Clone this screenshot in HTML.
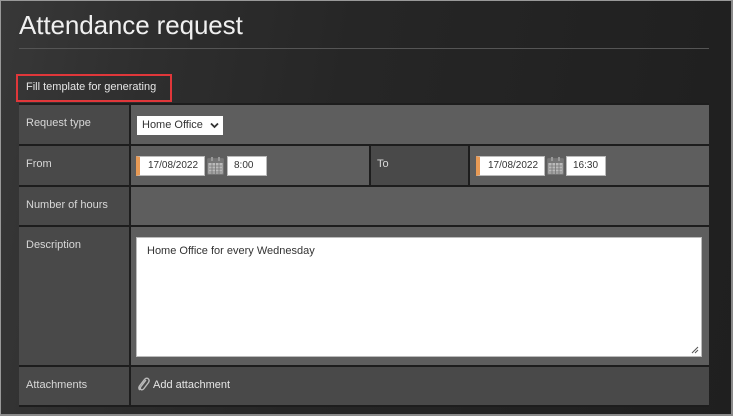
<!DOCTYPE html>
<html><head><meta charset="utf-8"><style>
*{box-sizing:border-box;margin:0;padding:0}
body{width:733px;height:416px;overflow:hidden;font-family:"Liberation Sans",sans-serif;background:#fff}
#f{position:absolute;left:0;top:0;width:733px;height:416px;border:1px solid #999;border-right:2px solid #8a8a8a;border-bottom:2px solid #8a8a8a;
background:linear-gradient(100deg,#383838 0%,#2e2e2e 20%,#262626 45%,#1f1f1f 100%);}
.a{position:absolute}
h1{position:absolute;left:18px;top:9px;font-weight:normal;font-size:26px;color:#f0f0f0;letter-spacing:-0.1px}
.rule{left:18px;top:47px;width:690px;height:1px;background:#555}
.red{left:15px;top:73px;width:156px;height:28px;border:2px solid #e0373a}
.t{font-size:11px;color:#d8d8d8}
.lab{background:#494949}
.val{background:#5e5e5e}
.inp{background:#fff;border:1px solid #bbb;font-size:10px;color:#333;padding-left:8px;line-height:18px}
</style></head><body><div id="f">
<h1>Attendance request</h1>
<div class="a rule"></div>
<div class="a red"></div>
<div class="a t" style="left:25px;top:80px;color:#e6e6e6">Fill template for generating</div>

<div class="a" style="left:18px;top:102px;width:690px;height:304px;background:#1d1d1d"></div>
<div class="a lab" style="left:18px;top:104px;width:110px;height:39px"></div>
<div class="a lab" style="left:18px;top:145px;width:110px;height:39px"></div>
<div class="a lab" style="left:18px;top:186px;width:110px;height:38px"></div>
<div class="a lab" style="left:18px;top:226px;width:110px;height:138px"></div>
<div class="a lab" style="left:18px;top:366px;width:110px;height:38px"></div>
<div class="a val" style="left:130px;top:104px;width:578px;height:39px"></div>
<div class="a val" style="left:130px;top:145px;width:238px;height:39px"></div>
<div class="a lab" style="left:370px;top:145px;width:97px;height:39px"></div>
<div class="a val" style="left:469px;top:145px;width:239px;height:39px"></div>
<div class="a val" style="left:130px;top:186px;width:578px;height:38px"></div>
<div class="a val" style="left:130px;top:226px;width:578px;height:138px"></div>
<div class="a lab" style="left:130px;top:366px;width:578px;height:38px"></div>

<div class="a t" style="left:25px;top:116px">Request type</div>
<div class="a t" style="left:25px;top:157px">From</div>
<div class="a t" style="left:25px;top:198px">Number of hours</div>
<div class="a t" style="left:25px;top:238px">Description</div>
<div class="a t" style="left:25px;top:378px">Attachments</div>
<div class="a t" style="left:376px;top:157px">To</div>

<div class="a" style="left:136px;top:115px;width:86px;height:19px;background:#fff;font-size:11px;color:#333;padding-left:5px;line-height:19px">Home Office
<svg style="position:absolute;right:4px;top:6px" width="9" height="7" viewBox="0 0 9 7"><path d="M1 1.5 L4.5 5 L8 1.5" stroke="#333" stroke-width="1.8" fill="none"/></svg></div>

<div class="a inp" style="left:135px;top:155px;width:69px;height:20px;border-left:4px solid #e89a55">17/08/2022</div>
<svg class="a" style="left:206px;top:155px" width="17" height="19" viewBox="0 0 17 19"><rect x="1" y="3" width="15" height="15" fill="#bbb" stroke="#888"/><rect x="1" y="3" width="15" height="4" fill="#777"/><rect x="4" y="1" width="2" height="4" fill="#999"/><rect x="11" y="1" width="2" height="4" fill="#999"/><path d="M2 10H15M2 13H15M2 16H15M5 7V18M8.5 7V18M12 7V18" stroke="#777" stroke-width="0.8"/></svg>
<div class="a inp" style="left:226px;top:155px;width:40px;height:20px;padding-left:6px">8:00</div>

<div class="a inp" style="left:475px;top:155px;width:69px;height:20px;border-left:4px solid #e89a55">17/08/2022</div>
<svg class="a" style="left:546px;top:155px" width="17" height="19" viewBox="0 0 17 19"><rect x="1" y="3" width="15" height="15" fill="#bbb" stroke="#888"/><rect x="1" y="3" width="15" height="4" fill="#777"/><rect x="4" y="1" width="2" height="4" fill="#999"/><rect x="11" y="1" width="2" height="4" fill="#999"/><path d="M2 10H15M2 13H15M2 16H15M5 7V18M8.5 7V18M12 7V18" stroke="#777" stroke-width="0.8"/></svg>
<div class="a inp" style="left:565px;top:155px;width:40px;height:20px;padding-left:6px">16:30</div>

<div class="a" style="left:135px;top:236px;width:566px;height:120px;background:#fff;border:1px solid #bbb;font-size:11px;color:#333;padding:7px 10px">Home Office for every Wednesday
<svg style="position:absolute;right:2px;bottom:2px" width="8" height="8"><path d="M1 7L7 1M4 7L7 4" stroke="#555" stroke-width="1"/></svg></div>

<svg class="a" style="left:136px;top:376px" width="13" height="14" viewBox="0 0 13 14"><path d="M9 3 L4 9.5 Q2.5 11.5 4 12.5 Q5.5 13.5 7 11.5 L11.5 5.5 Q13 3 11 1.5 Q9 0.5 7.5 2.5 L2.5 9 Q1 11.5 3 13" stroke="#bbb" stroke-width="1.4" fill="none"/></svg>
<div class="a t" style="left:152px;top:378px;color:#e6e6e6">Add attachment</div>
</div></body></html>
